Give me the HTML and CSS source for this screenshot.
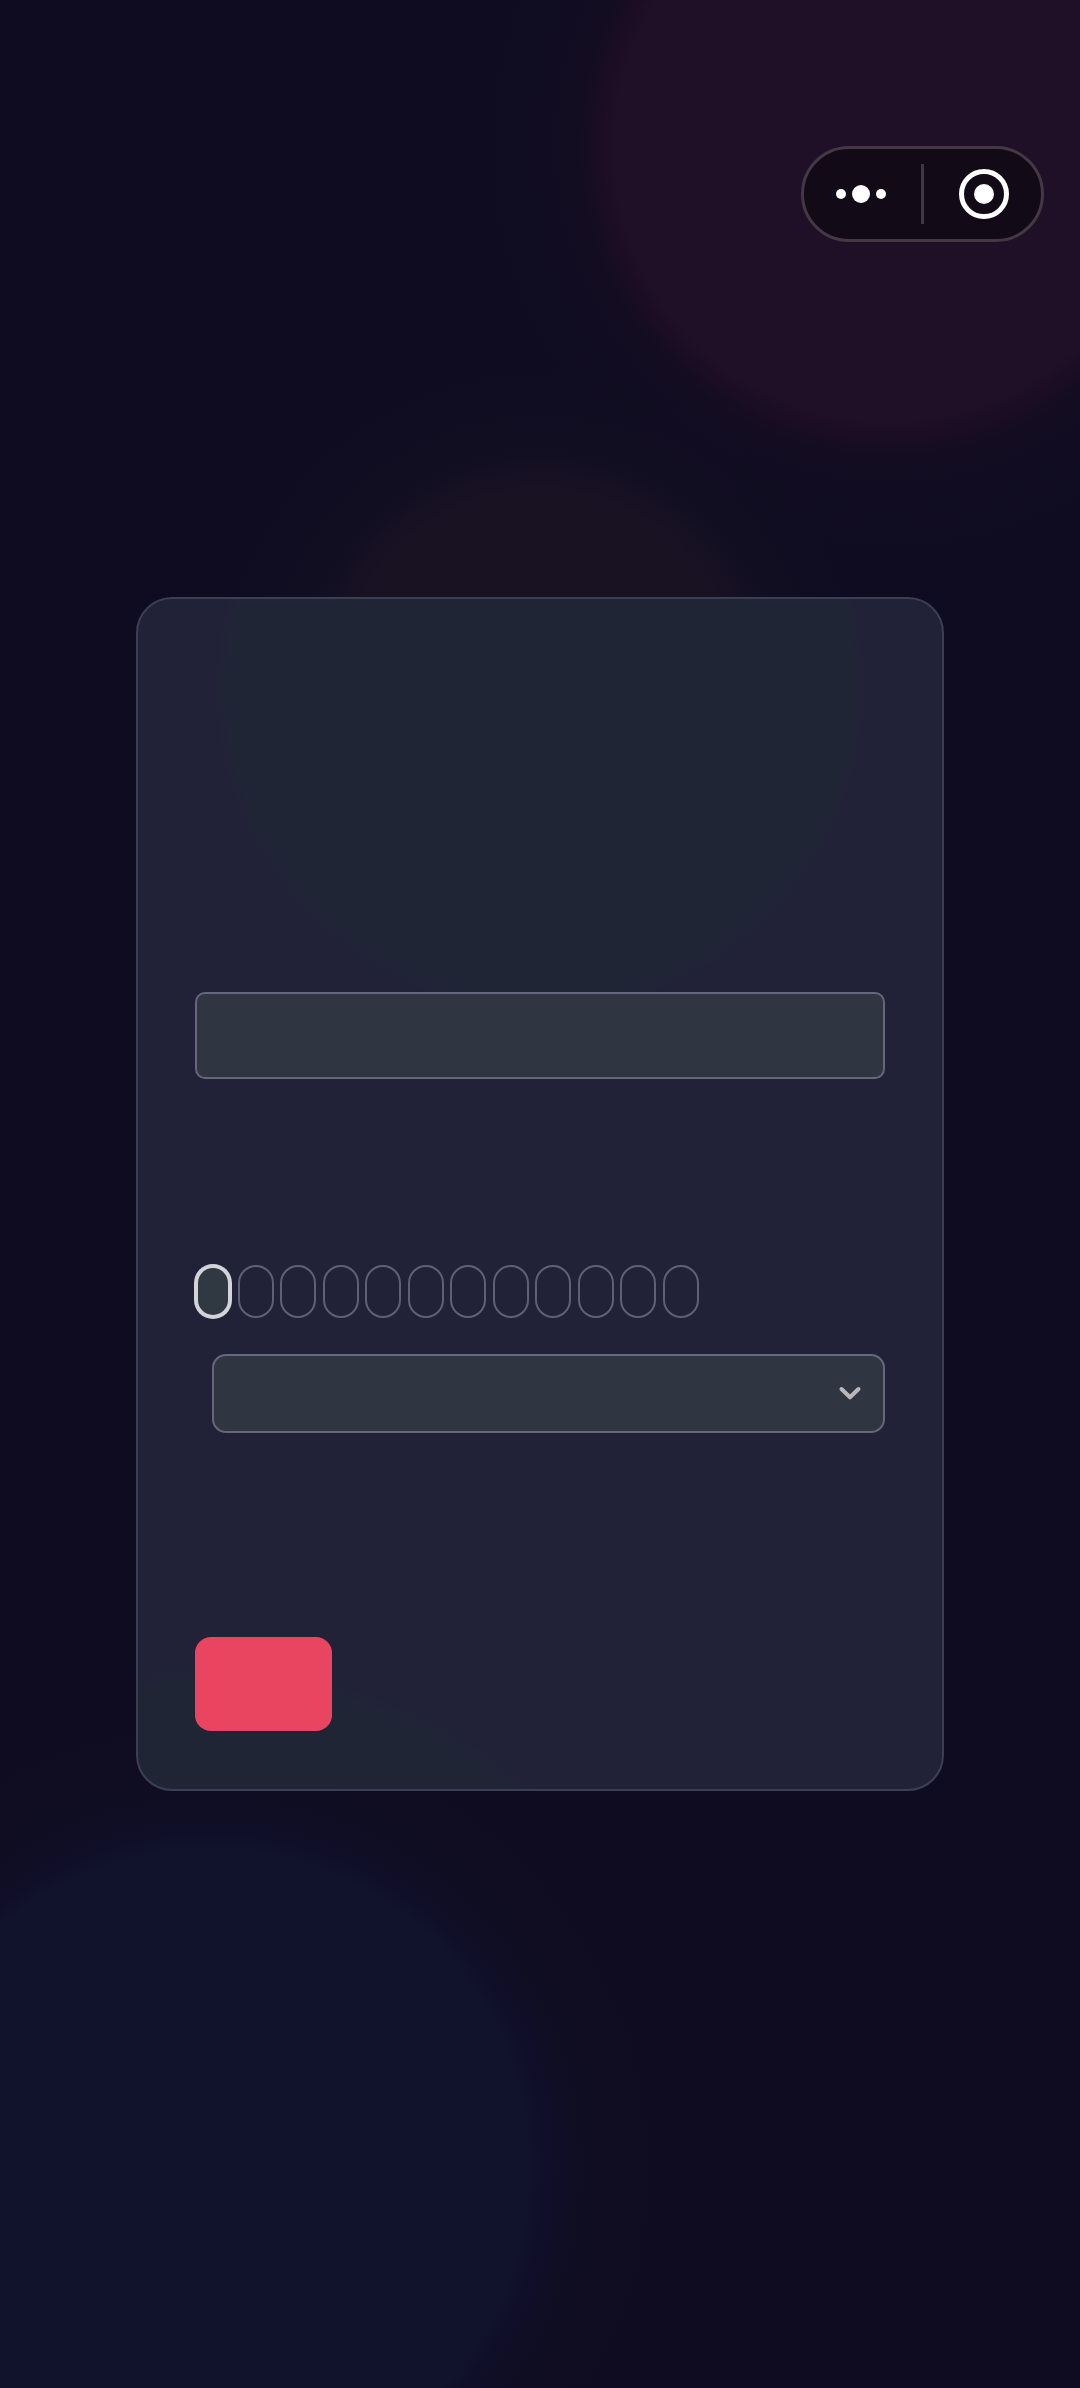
FILE: index.html
```html
<!DOCTYPE html>
<html lang="en">
<head>
<meta charset="utf-8">
<meta name="viewport" content="width=device-width, initial-scale=1">
<title>Form</title>
<link rel="stylesheet" href="styles.css">
</head>
<body>
<div class="page">
  <nav class="capsule" aria-label="App controls">
    <button class="capsule-button" type="button" aria-label="More">
      <svg width="50" height="50" viewBox="0 0 50 50" fill="#fff"><circle cx="5" cy="25" r="5"/><circle cx="25" cy="25" r="9"/><circle cx="45" cy="25" r="5"/></svg>
    </button>
    <span class="capsule-divider"></span>
    <button class="capsule-button" type="button" aria-label="Close">
      <svg width="50" height="50" viewBox="0 0 50 50"><circle cx="25" cy="25" r="22.5" fill="none" stroke="#fff" stroke-width="5"/><circle cx="25" cy="25" r="10" fill="#fff"/></svg>
    </button>
  </nav>
  <main class="card">
    <form class="form">
      <input class="field text-field" type="text" aria-label="Name">
      <div class="options">
        <div class="pills" role="radiogroup" aria-label="Options">
          <input class="pill" type="radio" name="option" aria-label="Option 1" checked>
          <input class="pill" type="radio" name="option" aria-label="Option 2">
          <input class="pill" type="radio" name="option" aria-label="Option 3">
          <input class="pill" type="radio" name="option" aria-label="Option 4">
          <input class="pill" type="radio" name="option" aria-label="Option 5">
          <input class="pill" type="radio" name="option" aria-label="Option 6">
          <input class="pill" type="radio" name="option" aria-label="Option 7">
          <input class="pill" type="radio" name="option" aria-label="Option 8">
          <input class="pill" type="radio" name="option" aria-label="Option 9">
          <input class="pill" type="radio" name="option" aria-label="Option 10">
          <input class="pill" type="radio" name="option" aria-label="Option 11">
          <input class="pill" type="radio" name="option" aria-label="Option 12">
        </div>
        <div class="select-wrap">
          <select class="field select-field" aria-label="Choice"><option></option></select>
          <svg class="chevron" width="24" height="16" viewBox="0 0 24 16" fill="none" stroke="#b8b8b8" stroke-width="4" stroke-linecap="round" stroke-linejoin="round"><path d="M3.500 4 12 12.300 20.500 4"/></svg>
        </div>
      </div>
      <button class="submit" type="submit" aria-label="Submit"></button>
    </form>
  </main>
</div>
</body>
</html>
```
FILE: styles.css
```css
* {
  box-sizing: border-box;
}

body {
  margin: 0;
  background: #0f0b20;
  font-family: "Noto Sans", sans-serif;
}

.page {
  position: relative;
  display: flex;
  align-items: center;
  justify-content: center;
  min-height: 100vh;
  padding: 0 136px;
  background:
    radial-gradient(circle at calc(100% - 191px) 147px, #1f1028 274px, #1d0d25 284px, #160e2399 310px, #130e2266 350px, #100c2100 410px),
    radial-gradient(circle at 50% calc(50% - 504px), #181223 200px, #14112499 240px, #100c2100 322px),
    radial-gradient(circle at 210px calc(100% - 220px), #11122b 318px, #100f2a 336px, #100f2399 370px, #100d2100 466px),
    #0f0b20;
}

.capsule {
  position: absolute;
  top: 146px;
  right: 36px;
  display: flex;
  align-items: center;
  width: 243px;
  height: 96px;
  border: 3px solid #453845;
  border-radius: 48px;
  background: #120a16;
}

.capsule-button {
  display: flex;
  flex: 1;
  align-items: center;
  justify-content: center;
  height: 100%;
  padding: 0 3px 0 0;
  border: 0;
  background: none;
}

.capsule-divider + .capsule-button {
  padding: 0 0 0 3px;
}

.capsule-divider {
  width: 3px;
  height: 60px;
  background: #413743;
}

.card {
  flex: 1;
  padding: 393px 57px 58px;
  border: 2px solid #3c3f54;
  border-radius: 36px;
  background:
    radial-gradient(circle at 50% 90px, #202536 310px, #20253600 324px),
    radial-gradient(circle at 72px calc(100% + 377px), #202536 484px, #20253600 496px),
    #212237;
}

.form {
  display: flex;
  flex-direction: column;
}

.field {
  display: block;
  width: 100%;
  margin: 0;
  padding: 0 24px;
  border: 2px solid #66677c;
  background: #303542;
  color: #fff;
  font: inherit;
  font-size: 28px;
  appearance: none;
  outline: none;
}

.text-field {
  height: 87px;
  border-radius: 10px;
}

.options {
  display: flex;
  flex-direction: column;
  gap: 36px;
  margin: 186px 0 204px;
}

.pills {
  display: flex;
  justify-content: space-between;
  width: 73%;
}

.pill {
  width: 36px;
  height: 53px;
  margin: 0;
  border: 2px solid #5f6075;
  border-radius: 18px;
  appearance: none;
}

.pill:checked {
  border: 3px solid #d2d4d8;
  background: #303842;
  box-shadow: 0 0 0 1px #d2d4d8;
}

.select-wrap {
  position: relative;
  margin-left: 17px;
}

.select-field {
  height: 79px;
  border-radius: 14px;
}

.chevron {
  position: absolute;
  top: 31px;
  right: 23px;
  pointer-events: none;
}

.submit {
  width: 137px;
  height: 94px;
  padding: 0;
  border: 0;
  border-radius: 16px;
  background: #ea4560;
}
```
